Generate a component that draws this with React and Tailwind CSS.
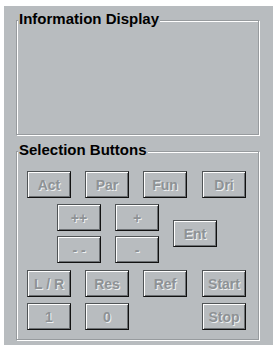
import React from "react";

const Btn = ({ label, className = "" }) => (
  <button
    className={
      "w-[44px] h-[27px] bg-[#b8bcbf] border border-t-[#505456] border-l-[#505456] border-r-[#111] border-b-[#111] shadow-[inset_1px_1px_0_#fff,inset_-1px_-1px_0_#6c7073] text-[14px] font-bold leading-none text-[#8e9295] [text-shadow:1px_1px_0_#eef0f1] " +
      className
    }
  >
    {label}
  </button>
);

const Group = ({ title, className = "", children }) => (
  <div
    className={
      "relative ml-[12px] w-[243px] border border-[#979b9e] shadow-[1px_1px_0_#fff,inset_1px_1px_0_#fff] " +
      className
    }
  >
    {/* title sits on the etched border */}
    <span className="absolute left-[1px] top-[-11px] px-[1px] bg-[#b8bcbf] text-[15px] font-bold leading-[17px] text-black">
      {title}
    </span>
    {children}
  </div>
);

export default function App() {
  return (
    <div className="w-[273px] h-[351px] bg-white pt-[6px] pl-[4px] font-['Liberation_Sans',Arial,sans-serif]">
      <div className="h-[339px] bg-[#b8bcbf] pt-[14px]">
        <Group title="Information Display" className="h-[115px]" />

        <Group title="Selection Buttons" className="mt-[16px] h-[189px] pt-[19px] pl-[10px]">
          <div className="flex flex-col gap-[6px]">
            <div className="flex gap-[14px]">
              <Btn label="Act" />
              <Btn label="Par" />
              <Btn label="Fun" />
              <Btn label="Dri" className="ml-px" />
            </div>

            <div className="flex items-center gap-[14px] ml-[30px]">
              <div className="flex flex-col gap-[5px]">
                <div className="flex gap-[14px]">
                  <Btn label="++" />
                  <Btn label="+" />
                </div>
                <div className="flex gap-[14px]">
                  <Btn label="- -" />
                  <Btn label="-" />
                </div>
              </div>
              <Btn label="Ent" />
            </div>

            <div className="flex gap-[14px] mt-px">
              <Btn label="L / R" />
              <Btn label="Res" />
              <Btn label="Ref" />
              <Btn label="Start" className="ml-px" />
            </div>

            <div className="flex gap-[14px]">
              <Btn label="1" />
              <Btn label="0" />
              <Btn label="Stop" className="ml-[59px]" />
            </div>
          </div>
        </Group>
      </div>
    </div>
  );
}
